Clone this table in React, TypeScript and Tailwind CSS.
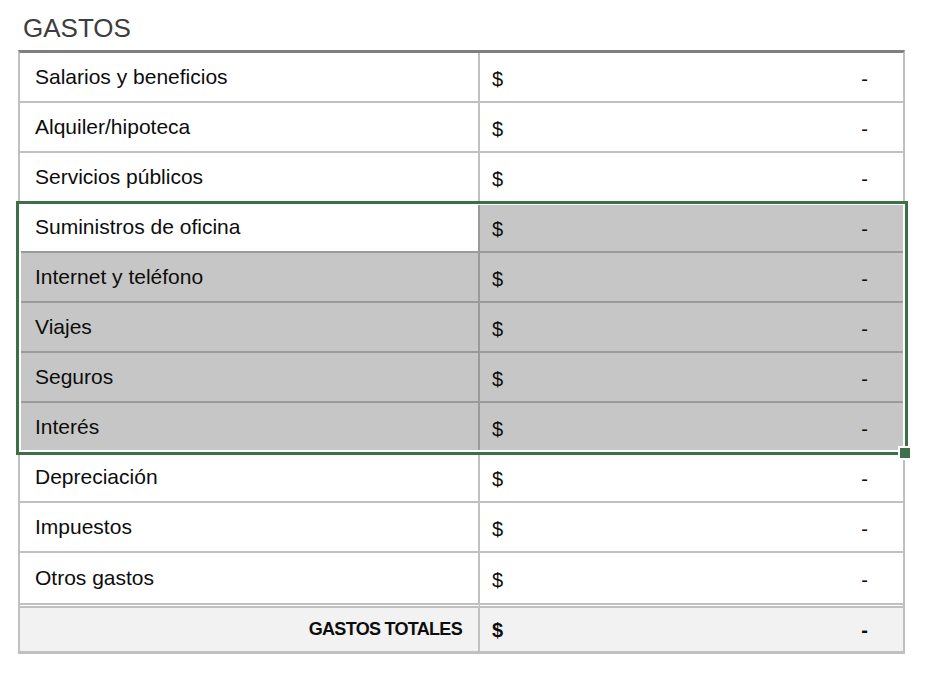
const expenses = [
  "Salarios y beneficios",
  "Alquiler/hipoteca",
  "Servicios públicos",
  "Suministros de oficina",
  "Internet y teléfono",
  "Viajes",
  "Seguros",
  "Interés",
  "Depreciación",
  "Impuestos",
  "Otros gastos",
]

// rows 3..7 are the selected range, row 3 is the active cell
const SEL_START = 3
const SEL_END = 7

function ExpenseRow({ label, index }: { label: string; index: number }) {
  const selected = index >= SEL_START && index <= SEL_END
  const active = index === SEL_START
  const last = index === expenses.length - 1
  const line = selected ? "border-[#9a9a9a]" : "border-[#c0c0c0]"
  const bottom = last ? "h-[55px] border-b-[5px] border-double" : "h-[50px] border-b-2"

  return (
    <div className="flex">
      <div
        className={`${bottom} ${line} w-[460px] border-r-2 pl-[15px] pb-[1px] flex items-center text-[21px] ${
          selected && !active ? "bg-[#c6c6c6]" : "bg-white"
        }`}
      >
        {label}
      </div>
      <div
        className={`${bottom} ${line} flex-1 pl-[12px] pr-[35px] pt-[4px] flex items-center justify-between text-[20px] ${
          selected ? "bg-[#c6c6c6]" : "bg-white"
        }`}
      >
        <span>$</span>
        <span>-</span>
      </div>
    </div>
  )
}

export default function App() {
  return (
    <div className="w-[930px] h-[680px] bg-white text-[#0d0d0d] font-['Liberation_Sans',Arial,sans-serif]">
      <div className="h-[50px] pt-[13px] pl-[23px] text-[26px] leading-[30px] text-[#3d3d3d]">GASTOS</div>

      <div className="relative ml-[18px] w-[887px] border-x-2 border-t-[3px] border-b-[3px] border-[#c0c0c0] border-t-[#7f7f7f]">
        {expenses.map((label, i) => (
          <ExpenseRow key={label} label={label} index={i} />
        ))}

        <div className="flex h-[43px] bg-[#f2f2f2]">
          <div className="w-[460px] border-r-2 border-[#c0c0c0] pr-[16px] flex items-center justify-end text-[18px] font-bold tracking-[-0.7px]">
            GASTOS TOTALES
          </div>
          <div className="flex-1 pl-[12px] pr-[35px] pt-[1px] flex items-center justify-between text-[20px] font-bold">
            <span>$</span>
            <span>-</span>
          </div>
        </div>

        {/* selection outline */}
        <div className="absolute left-[-4px] top-[148px] w-[892px] h-[254px] border-[3px] border-[#3c7048] pointer-events-none">
          <div className="absolute inset-0 border-t border-x-2 border-b-2 border-white" />
        </div>
        <div className="absolute left-[878px] top-[393px] w-[14px] h-[14px] border-2 border-white bg-[#3c7048]" />
      </div>
    </div>
  )
}
